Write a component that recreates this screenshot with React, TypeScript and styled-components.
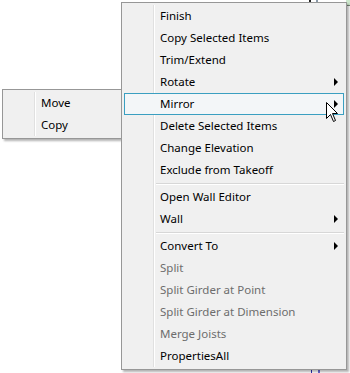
import styled, { createGlobalStyle } from "styled-components";

const GlobalStyle = createGlobalStyle`
  html, body {
    margin: 0;
    padding: 0;
    background: #ffffff;
  }
  body {
    font-family: "Noto Sans", "Open Sans", sans-serif;
  }
`;

const Stage = styled.div`
  position: relative;
  width: 350px;
  height: 373px;
  overflow: hidden;
  background: #ffffff;
`;

const Backdrop = styled.svg`
  position: absolute;
  left: 0;
  top: 0;
`;

const Menu = styled.ul<{ $left: number; $top: number; $width: number; $gutter: number }>`
  position: absolute;
  left: ${(p) => p.$left}px;
  top: ${(p) => p.$top}px;
  width: ${(p) => p.$width}px;
  margin: 0;
  padding: 2px 0;
  list-style: none;
  background: #f0f0f0;
  border: 1px solid #979797;
  box-shadow: 2px 2px 2px rgba(0, 0, 0, 0.3);
  box-sizing: border-box;

  &::before {
    content: "";
    position: absolute;
    top: 2px;
    bottom: 2px;
    left: ${(p) => p.$gutter}px;
    width: 1px;
    background: #e0e0e0;
    border-right: 1px solid #ffffff;
  }
`;

const Item = styled.li<{ $disabled?: boolean; $active?: boolean }>`
  position: relative;
  display: flex;
  align-items: center;
  height: 22px;
  margin: 0 2px;
  padding-left: 35px;
  padding-right: 5px;
  box-sizing: border-box;
  font-size: 11.5px;
  color: ${(p) => (p.$disabled ? "#6d6d6d" : "#000000")};
  border: 1px solid ${(p) => (p.$active ? "#3a9fc1" : "transparent")};
  background: ${(p) => (p.$active ? "#f3f6f8" : "transparent")};
  white-space: nowrap;
`;

const Label = styled.span`
  flex: 1;
  padding-bottom: 1px;
`;

const Arrow = styled.span`
  width: 0;
  height: 0;
  border-top: 4px solid transparent;
  border-bottom: 4px solid transparent;
  border-left: 4px solid #000000;
`;

const Separator = styled.li<{ $inset: number }>`
  height: 1px;
  margin: 2px 2px 1px ${(p) => p.$inset}px;
  background: #d7d7d7;
  border-bottom: 1px solid #ffffff;
`;

const Cursor = styled.svg`
  position: absolute;
  left: 326px;
  top: 102px;
`;

type Entry =
  | { kind: "item"; label: string; sub?: boolean; disabled?: boolean; active?: boolean }
  | { kind: "sep" };

const mainEntries: Entry[] = [
  { kind: "item", label: "Finish" },
  { kind: "item", label: "Copy Selected Items" },
  { kind: "item", label: "Trim/Extend" },
  { kind: "item", label: "Rotate", sub: true },
  { kind: "item", label: "Mirror", sub: true, active: true },
  { kind: "item", label: "Delete Selected Items" },
  { kind: "item", label: "Change Elevation" },
  { kind: "item", label: "Exclude from Takeoff" },
  { kind: "sep" },
  { kind: "item", label: "Open Wall Editor" },
  { kind: "item", label: "Wall", sub: true },
  { kind: "sep" },
  { kind: "item", label: "Convert To", sub: true },
  { kind: "item", label: "Split", disabled: true },
  { kind: "item", label: "Split Girder at Point", disabled: true },
  { kind: "item", label: "Split Girder at Dimension", disabled: true },
  { kind: "item", label: "Merge Joists", disabled: true },
  { kind: "item", label: "PropertiesAll" },
];

const subEntries: Entry[] = [
  { kind: "item", label: "Move" },
  { kind: "item", label: "Copy" },
];

function MenuList({ entries }: { entries: Entry[] }) {
  return (
    <>
      {entries.map((e, i) =>
        e.kind === "sep" ? (
          <Separator key={i} $inset={34} />
        ) : (
          <Item key={i} $disabled={e.disabled} $active={e.active}>
            <Label>{e.label}</Label>
            {e.sub && <Arrow />}
          </Item>
        )
      )}
    </>
  );
}

export default function App() {
  return (
    <Stage>
      <GlobalStyle />
      <Backdrop width="350" height="373">
        <rect x="346" y="0" width="4" height="5" fill="#cde8cd" />
        <line x1="346" y1="5.5" x2="350" y2="5.5" stroke="#7a8a7a" />
        <rect x="309" y="0" width="2" height="2" fill="#222" />
        <rect x="316" y="0" width="2" height="2" fill="#8a9aa8" />
        <rect x="311" y="368" width="1" height="5" fill="#2a2ab8" />
        <rect x="318" y="368" width="2" height="5" fill="#6c6cd6" />
      </Backdrop>
      <Menu $left={2} $top={89} $width={121} $gutter={31}>
        <MenuList entries={subEntries} />
      </Menu>
      <Menu $left={121} $top={2} $width={226} $gutter={31}>
        <MenuList entries={mainEntries} />
      </Menu>
      <Cursor width="13" height="21" viewBox="0 0 13 21">
        <path
          d="M0.5 0.5 L0.5 16.5 L4.5 12.5 L7.5 19.5 L9.5 18.5 L6.5 11.5 L11.5 11.5 Z"
          fill="#ffffff"
          stroke="#000000"
          strokeWidth="1"
        />
      </Cursor>
    </Stage>
  );
}
